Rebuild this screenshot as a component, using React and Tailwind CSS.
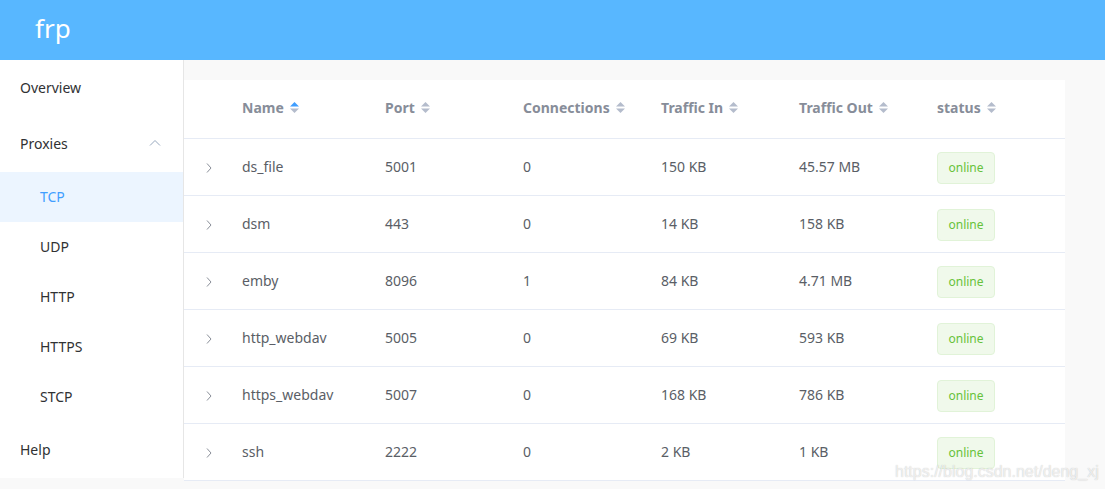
const rows = [
  { name: 'ds_file', port: '5001', conns: '0', tin: '150 KB', tout: '45.57 MB' },
  { name: 'dsm', port: '443', conns: '0', tin: '14 KB', tout: '158 KB' },
  { name: 'emby', port: '8096', conns: '1', tin: '84 KB', tout: '4.71 MB' },
  { name: 'http_webdav', port: '5005', conns: '0', tin: '69 KB', tout: '593 KB' },
  { name: 'https_webdav', port: '5007', conns: '0', tin: '168 KB', tout: '786 KB' },
  { name: 'ssh', port: '2222', conns: '0', tin: '2 KB', tout: '1 KB' },
]

function SortIcon({ active }) {
  return (
    <svg width="11" height="15" viewBox="0 0 11 15" className="ml-[5px]">
      <path d="M1 6.5 L5.5 2 L10 6.5 Z" fill={active ? '#409eff' : '#b4bccc'} />
      <path d="M1 8.5 L5.5 13 L10 8.5 Z" fill="#b4bccc" />
    </svg>
  )
}

function Chevron() {
  return (
    <svg width="8" height="12" viewBox="0 0 8 12">
      <path d="M2 1.5 L6 6 L2 10.5" fill="none" stroke="#8a8f99" strokeWidth="1" />
    </svg>
  )
}

const cols = ['Name', 'Port', 'Connections', 'Traffic In', 'Traffic Out', 'status']

export default function App() {
  return (
    <div className="w-[1105px] h-[489px] bg-[#f9f9f9] relative overflow-hidden font-['Noto_Sans',sans-serif] text-[14px]">
      {/* Header */}
      <div className="h-[60px] bg-[#58b7ff] flex items-center pl-[35px]">
        <span className="text-white text-[26px] leading-none -mt-[4px]">frp</span>
      </div>

      <div className="flex">
        {/* Sidebar */}
        <div className="w-[184px] h-[418px] bg-white border-r border-[#e6e6e6] text-[#303133] shrink-0">
          <div className="h-[56px] flex items-center pl-[20px] pb-[2px]">Overview</div>
          <div className="h-[56px] flex items-center pl-[20px] pr-[22px] justify-between pb-[2px]">
            <span>Proxies</span>
            <svg width="12" height="8" viewBox="0 0 12 8">
              <path d="M1 6.5 L6 1.5 L11 6.5" fill="none" stroke="#97a8be" strokeWidth="1" />
            </svg>
          </div>
          <div className="h-[50px] flex items-center pl-[40px] bg-[#ecf5ff] text-[#409eff] pb-[2px]">TCP</div>
          <div className="h-[50px] flex items-center pl-[40px] pb-[2px]">UDP</div>
          <div className="h-[50px] flex items-center pl-[40px] pb-[2px]">HTTP</div>
          <div className="h-[50px] flex items-center pl-[40px] pb-[2px]">HTTPS</div>
          <div className="h-[50px] flex items-center pl-[40px] pb-[2px]">STCP</div>
          <div className="h-[56px] flex items-center pl-[20px] pb-[2px]">Help</div>
        </div>

        {/* Main */}
        <div className="pt-[20px] pr-[40px] flex-1">
          <div className="bg-white">
            <div className="flex h-[59px] items-center border-b border-[#e6ebf5] text-[#878d99] font-bold pb-[4px]">
              <div className="w-[48px]" />
              {cols.map((c, i) => (
                <div key={c} className={`${i === 0 ? 'w-[143px]' : 'w-[138px]'} pl-[10px] flex items-center`}>
                  {c}
                  <SortIcon active={i === 0} />
                </div>
              ))}
            </div>
            {rows.map((r) => (
              <div key={r.name} className="flex h-[57px] items-center border-b border-[#e6ebf5] text-[#5a5e66] pb-[2px]">
                <div className="w-[48px] flex justify-center pl-[2px] pt-[4px]">
                  <Chevron />
                </div>
                <div className="w-[143px] pl-[10px]">{r.name}</div>
                <div className="w-[138px] pl-[10px]">{r.port}</div>
                <div className="w-[138px] pl-[10px]">{r.conns}</div>
                <div className="w-[138px] pl-[10px]">{r.tin}</div>
                <div className="w-[138px] pl-[10px]">{r.tout}</div>
                <div className="w-[138px] pl-[10px] pt-[4px]">
                  <span className="inline-flex items-center justify-center h-[32px] w-[58px] rounded-[4px] bg-[#f0f9eb] border border-[#e1f3d8] text-[#67c23a] text-[12px]">
                    online
                  </span>
                </div>
              </div>
            ))}
          </div>
        </div>
      </div>

      <div className="absolute left-[895px] top-[460px] text-[16px] text-white/70 font-['Liberation_Sans',sans-serif] [text-shadow:0_0_1px_rgba(0,0,0,0.25)]">
        https://blog.csdn.net/deng_xj
      </div>
    </div>
  )
}
